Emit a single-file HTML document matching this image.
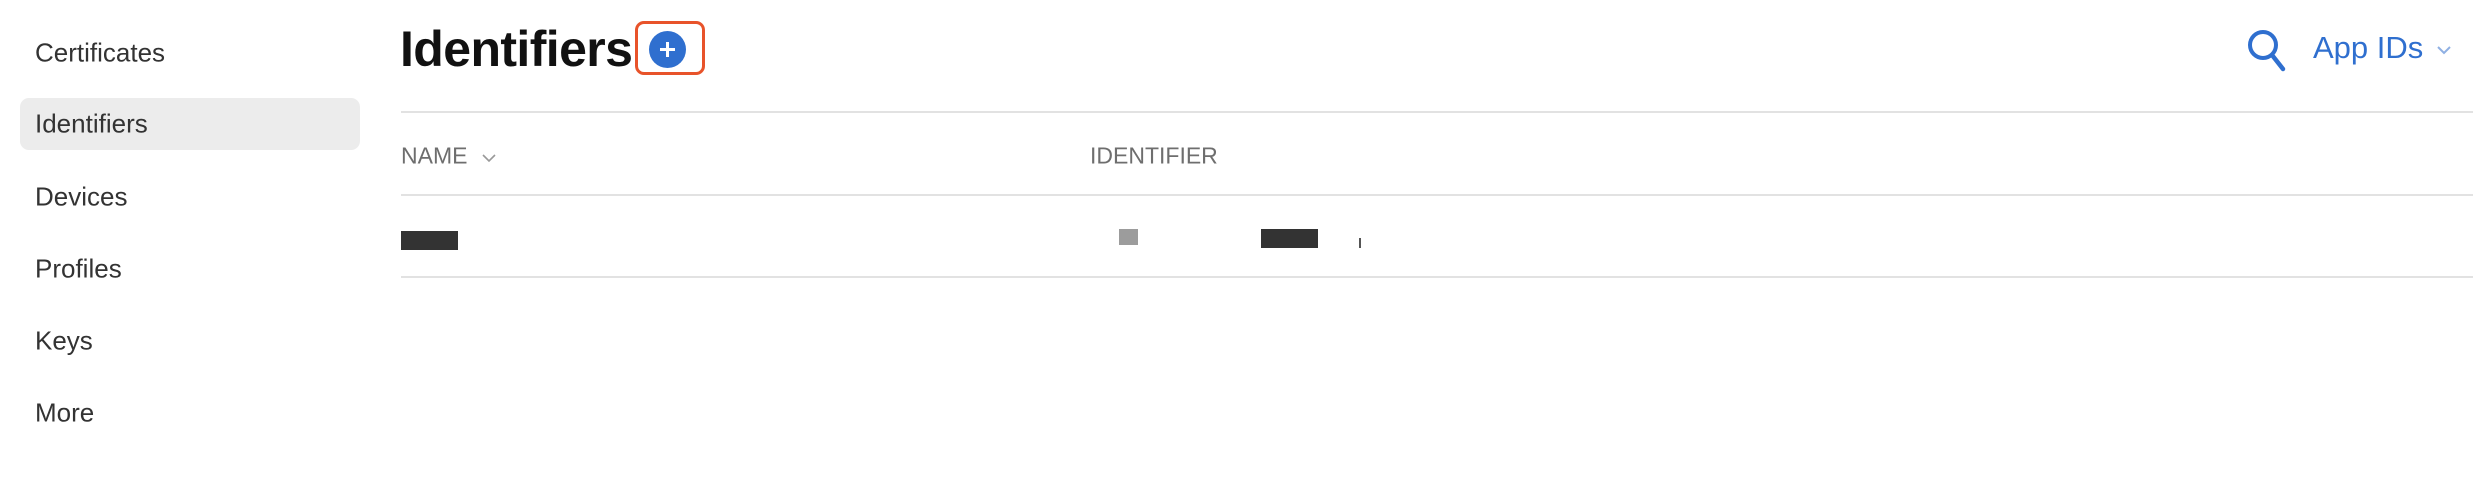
<!DOCTYPE html>
<html><head><style>
body{margin:0;width:2478px;height:490px;background:#fff;font-family:"Liberation Sans",sans-serif;position:relative;overflow:hidden}
.a{position:absolute}
.nav{left:35px;font-size:26px;color:#333;transform:translateY(-50%)}
.hl{left:20px;top:98px;width:340px;height:52px;background:#ececec;border-radius:9px}
.line{left:401px;width:2072px;height:2px;background:#e2e2e2}
.hd{font-size:23px;color:#6e6e6e;transform:translateY(-50%)}
</style></head><body>
<div class="a hl"></div>
<div class="a nav" style="top:53px">Certificates</div>
<div class="a nav" style="top:124px">Identifiers</div>
<div class="a nav" style="top:197px">Devices</div>
<div class="a nav" style="top:269px">Profiles</div>
<div class="a nav" style="top:341px">Keys</div>
<div class="a nav" style="top:413px">More</div>

<div class="a" style="left:400px;top:49px;transform:translateY(-50%);font-size:50px;font-weight:bold;color:#111;letter-spacing:-0.6px">Identifiers</div>
<div class="a" style="left:635px;top:21px;width:64px;height:48px;border:3px solid #e8532a;border-radius:9px;background:#fff"></div>
<div class="a" style="left:649px;top:31px;width:37px;height:37px;border-radius:50%;background:#2f6fcf"></div>
<div class="a" style="left:660px;top:48px;width:15px;height:3px;background:#fff"></div>
<div class="a" style="left:666px;top:42px;width:3px;height:15px;background:#fff"></div>

<svg class="a" style="left:2246px;top:28px" width="42" height="46" viewBox="0 0 42 46"><circle cx="17" cy="17" r="13" fill="none" stroke="#2f6fcf" stroke-width="4"/><line x1="26" y1="27" x2="37" y2="41" stroke="#2f6fcf" stroke-width="4.5" stroke-linecap="round"/></svg>
<div class="a" style="left:2313px;top:48px;transform:translateY(-50%);font-size:31px;color:#2f6fcf">App IDs</div>
<svg class="a" style="left:2436px;top:44px" width="16" height="12"><polyline points="2,3 8,9 14,3" fill="none" stroke="#8fb0e3" stroke-width="2"/></svg>

<div class="a line" style="top:111px"></div>
<div class="a hd" style="left:401px;top:156px">NAME</div>
<svg class="a" style="left:481px;top:152px" width="16" height="12"><polyline points="2,3 8,9 14,3" fill="none" stroke="#999" stroke-width="1.6"/></svg>
<div class="a hd" style="left:1090px;top:156px">IDENTIFIER</div>
<div class="a line" style="top:194px"></div>
<div class="a" style="left:401px;top:231px;width:57px;height:19px;background:#333"></div>
<div class="a" style="left:1119px;top:229px;width:19px;height:16px;background:#9c9c9c"></div>
<div class="a" style="left:1261px;top:229px;width:57px;height:19px;background:#333"></div>
<div class="a" style="left:1359px;top:238px;width:2px;height:10px;background:#555"></div>
<div class="a line" style="top:276px"></div>
</body></html>
